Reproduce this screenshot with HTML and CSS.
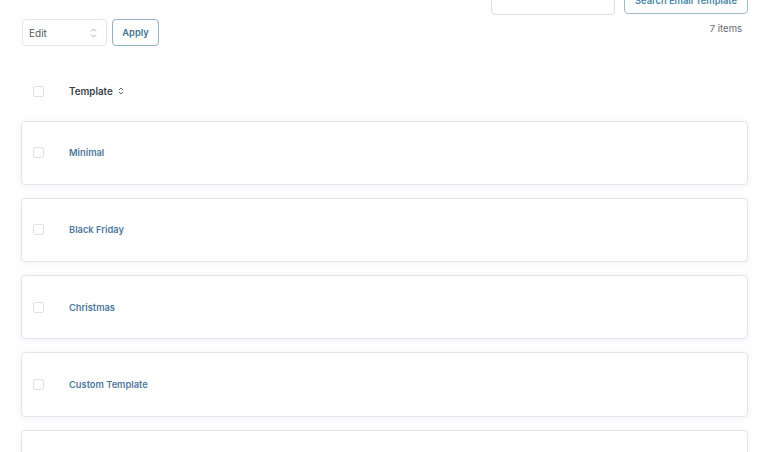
FILE: index.html
```html
<!DOCTYPE html>
<html>
<head>
<meta charset="utf-8">
<link rel="stylesheet" href="styles.css">
</head>
<body>
<div class="page">
  <div class="search-box">
    <input class="search-input" type="text">
    <button class="btn search-btn">Search Email Template</button>
  </div>
  <div class="tablenav">
    <div class="bulk">
      <div class="select">
        <span>Edit</span>
        <svg class="updown" width="7" height="10" viewBox="0 0 7 10"><path d="M1 3.5 L3.5 1 L6 3.5 M1 6.5 L3.5 9 L6 6.5" fill="none" stroke="#a7aaad" stroke-width="1"/></svg>
      </div>
      <button class="btn apply-btn">Apply</button>
    </div>
    <div class="count">7 items</div>
  </div>
  <div class="thead">
    <span class="cb"></span>
    <span class="th-label">Template</span>
    <svg class="sort" width="6" height="8" viewBox="0 0 6 8"><path d="M1 3 L3 1 L5 3 M1 5 L3 7 L5 5" fill="none" stroke="#50575e" stroke-width="0.9"/></svg>
  </div>
  <div class="rows">
    <div class="card"><span class="cb"></span><a class="name">Minimal</a></div>
    <div class="card"><span class="cb"></span><a class="name">Black Friday</a></div>
    <div class="card"><span class="cb"></span><a class="name">Christmas</a></div>
    <div class="card"><span class="cb"></span><a class="name">Custom Template</a></div>
    <div class="card"></div>
  </div>
</div>
</body>
</html>
```
FILE: styles.css
```css
html, body {
  margin: 0;
  padding: 0;
  background: #fefeff;
  overflow: hidden;
  height: 452px;
}
body {
  font-family: Inter, "Noto Sans", sans-serif;
  color: #3c434a;
}
.page {
  padding: 0 21px 0 21px;
}
.search-box {
  display: flex;
  justify-content: flex-end;
  gap: 9px;
  margin-top: -14px;
}
.search-input {
  width: 124px;
  height: 29px;
  box-sizing: border-box;
  border: 1px solid #dcdfe4;
  border-radius: 4px;
  background: #fff;
  margin: 0;
}
.btn {
  box-sizing: border-box;
  background: #fff;
  border-radius: 4px;
  font-family: Inter, "Noto Sans", sans-serif;
  font-weight: 600;
  font-size: 9.3px;
  padding: 0;
  margin: 0;
}
.search-btn {
  width: 124px;
  height: 28px;
  border: 1px solid #9fbccb;
  color: #4a86a8;
}
.tablenav {
  display: flex;
  justify-content: space-between;
  align-items: flex-start;
  margin-top: 4px;
  height: 27px;
}
.bulk {
  display: flex;
  gap: 5px;
  padding-left: 1px;
}
.select {
  width: 85px;
  height: 27px;
  box-sizing: border-box;
  border: 1px solid #e3e5e8;
  border-radius: 4px;
  background: #fff;
  display: flex;
  align-items: center;
  justify-content: space-between;
  padding: 0 9px 0 6px;
  font-size: 10px;
  color: #50575e;
}
.apply-btn {
  width: 47px;
  height: 27px;
  border: 1px solid #93b3c3;
  color: #3f7591;
}
.count {
  font-size: 9.5px;
  color: #646970;
  padding-top: 4px;
  padding-right: 6px;
}
.thead {
  display: flex;
  align-items: center;
  height: 44px;
  margin-top: 23px;
  margin-bottom: 7.5px;
  padding-left: 12px;
}
.cb {
  width: 11px;
  height: 11px;
  box-sizing: border-box;
  border: 1px solid #dfe1e5;
  border-radius: 2px;
  background: #fff;
  flex: none;
}
.th-label {
  margin-left: 25px;
  font-size: 9.8px;
  font-weight: 600;
  color: #3a3f45;
}
.sort {
  margin-left: 5px;
}
.rows {
  display: flex;
  flex-direction: column;
  gap: 13px;
}
.card {
  height: 64.3px;
  flex: none;
  box-sizing: border-box;
  border: 1px solid #e1e5ec;
  border-radius: 4px;
  background: #fff;
  box-shadow: 0 1px 6px rgba(40, 60, 120, 0.06);
  display: flex;
  align-items: center;
  padding-left: 11px;
}
.name {
  margin-left: 25px;
  font-size: 9.3px;
  font-weight: 600;
  color: #50799e;
}
```
